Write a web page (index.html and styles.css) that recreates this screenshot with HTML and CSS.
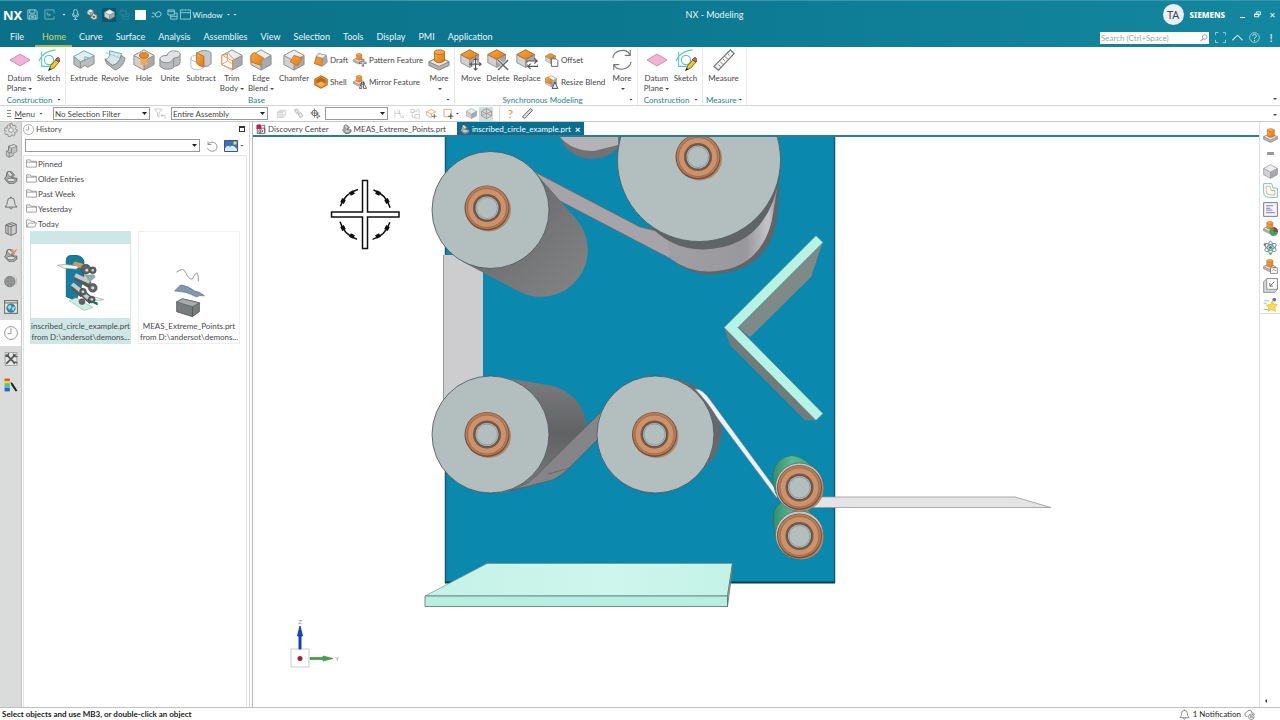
FILE: index.html
```html
<!DOCTYPE html>
<html lang="en">
<head>
<meta charset="utf-8">
<title>NX - Modeling</title>
<link rel="stylesheet" href="styles.css">
</head>
<body>
<svg class="sprite" aria-hidden="true">
  <defs>
    <linearGradient id="gOr" x1="0" y1="0" x2="1" y2="1"><stop offset="0" stop-color="#f9a845"/><stop offset="1" stop-color="#e07a10"/></linearGradient>
  </defs>
  <symbol id="plane" viewBox="0 0 24 24"><path d="M1 12 12 5.500 23 12 12 18.500Z" fill="#f3b3d4" stroke="#c78aa8"/></symbol>
  <symbol id="sketch" viewBox="0 0 24 24"><g fill="none" stroke="#5cc6c4" stroke-width="1.200"><path d="M1 13C4 6 10 2 19 1M4 3v16h9"/><circle cx="12" cy="12" r="5"/></g><path d="M12 23l2-5 7-8 3 3-7 8z" fill="#f2c928" stroke="#6b5a20"/><path d="M19 11.500 22 9l2 2.500-2 2.500z" fill="#c96a6a" stroke="#6b3a30"/><path d="m11 24 1.500-3.500 2 1.500z" fill="#222"/></symbol>
  <symbol id="cube" viewBox="0 0 24 24"><path d="M12 1 23 7 12 13 1 7Z" fill="#eceded"/><path d="M1 7v10l11 6V13Z" fill="#cfd1d2"/><path d="M23 7v10l-11 6V13Z" fill="#a7aaac"/><path d="M12 1 23 7v10l-11 6L1 17V7ZM1 7l11 6 11-6M12 13v10" fill="none" stroke="#85888a"/></symbol>
  <symbol id="warmcube" viewBox="0 0 24 24"><path d="M12 1 23 7v10l-11 6L1 17V7Z" fill="#ccd5d6" stroke="#8a7474" stroke-width="1.300"/><path d="M1 7l11 6 11-6M12 13v10M1 17l11-6 11 6M12 1v10" fill="none" stroke="#b27b7b" stroke-width="1.300"/></symbol>
  <symbol id="extrude" viewBox="0 0 24 24"><path d="M1 8v9l7 4 5-3 3 2 7-4V7L13 12l-5 2Z" fill="#babdbe" stroke="#888"/><path d="M1 8l11-6 11 5-5 3-5-1.500v3L8 14Z" fill="#e5eceb" stroke="#49b5ae"/><path d="M8 14v7" stroke="#888"/></symbol>
  <symbol id="revolve" viewBox="0 0 24 24"><path d="M6 2l13 3-2 7q-3 5-8 6L1 11q6 1 5-9Z" fill="#dce6e5" stroke="#49b5ae"/><path d="M1 11l8 7q7-1 10-11l4 3q-2 10-11 13l-9-7Z" fill="#b3b6b7" stroke="#808384"/><path d="M2 4l16 6" stroke="#7bc" stroke-dasharray="3 1"/></symbol>
  <symbol id="hole" viewBox="0 0 24 24"><use href="#cube"/><path d="M8 7v9q4 4 8 0V7Z" fill="#efa95c"/><ellipse cx="12" cy="7" rx="5" ry="3" fill="#f08c1c" stroke="#ba6b14"/></symbol>
  <symbol id="unite" viewBox="0 0 24 24"><path d="M1 11v8q4 4 10 3 4 0 6-3 6-1 6-4V6H10z" fill="#b9bcbd" stroke="#848688"/><path d="M1 11q0-4 8-4 1-5 7-5 7 0 7 4 0 3-7 4-2 5-8 5-6 0-7-4Z" fill="#e3e5e5" stroke="#848688"/><path d="M16 10v9" stroke="#848688"/></symbol>
  <symbol id="subtract" viewBox="0 0 24 24"><path d="M8 4q8-5 15 0v12q-3 4-8 3V9L8 5Z" fill="#c6c8c9" stroke="#888"/><path d="M7 4l8 4v12q-7-2-8-5Z" fill="url(#gOr)" stroke="#c56e15"/><path d="M1 10q0-3 6-3M1 10v9c1 5 13 5 14 0M1 10q1 4 7 4" fill="none" stroke="#9aaad5" stroke-width=".8"/></symbol>
  <symbol id="trim" viewBox="0 0 24 24"><use href="#cube"/><path d="M1 7 12 13v10L1 17Z" fill="#fff"/><path d="M1 7l7-2 6 6-2 11-11-5Zm0 10 6-4 7 4M7 5v8" fill="none" stroke="#f0963c"/></symbol>
  <symbol id="edge" viewBox="0 0 24 24"><use href="#cube"/><path d="M1 8q1-4 4-4l10 6q-4 2-3 8L1 14Z" fill="url(#gOr)" stroke="#cc7315"/></symbol>
  <symbol id="chamfer" viewBox="0 0 24 24"><use href="#cube"/><path d="M12 7l9 3-5 8-8-4Z" fill="url(#gOr)" stroke="#cc7315"/></symbol>
  <symbol id="draft" viewBox="0 0 24 24"><path d="M8 1l13 3 2 12-9 7L1 18 4 6Z" fill="#a8abad" stroke="#7d8082"/><path d="M4 6l11 3-2 13-12-4Z" fill="#f2912a" stroke="#c06c18"/><path d="M8 1l13 3-6 5L4 6Z" fill="#eee" stroke="#888"/></symbol>
  <symbol id="shell" viewBox="0 0 24 24"><path d="M12 1 23 7v10l-11 6L1 17V7Z" fill="#e48a2c" stroke="#925719"/><path d="M12 4 20 8.500v6L12 19l-8-4.500v-6Z" fill="#b56a20"/><path d="m12 11 8 4-8 5-8-5z" fill="#ffb157"/></symbol>
  <symbol id="boss" viewBox="0 0 24 24"><path d="M1 14 12 9l11 5v4l-11 5-11-5Z" fill="#b2b5b6" stroke="#7d8082"/><path d="M1 14 12 9l11 5-11 5Z" fill="#e8e9e9" stroke="#7d8082"/><path d="M7 3v10q5 4 11 0V3Z" fill="url(#gOr)" stroke="#bf6b16"/><ellipse cx="12.500" cy="3.500" rx="5.500" ry="2.500" fill="#f6a848" stroke="#bf6b16"/></symbol>
  <symbol id="pattern" viewBox="0 0 24 24"><use href="#boss" width="20" height="20"/><path d="M17 11v12M11 17h12" stroke="#555" stroke-width="4"/><path d="M17 12v10M12 17h10" stroke="#fff" stroke-width="1.500"/></symbol>
  <symbol id="mirror" viewBox="0 0 24 24"><use href="#boss" width="20" height="20"/><path d="m11 23 4-11v11zm7-11 5 11h-5z" fill="#fff" stroke="#555" stroke-width="1.500"/></symbol>
  <symbol id="orcube" viewBox="0 0 24 24"><use href="#cube"/><path d="M12 1 23 7 12 13 1 7Z" fill="url(#gOr)" stroke="#b96715"/></symbol>
  <symbol id="move" viewBox="0 0 24 24"><use href="#orcube" width="21" height="21"/><path d="M17 10v13M11 16.500h12" stroke="#fff" stroke-width="3"/><path d="M17 10v13M11 16.500h12M15 12l2-2 2 2M15 21l2 2 2-2M13 14.500l-2 2 2 2M21 14.500l2 2-2 2" stroke="#555" stroke-width="1.200" fill="none"/></symbol>
  <symbol id="delete" viewBox="0 0 24 24"><use href="#orcube" width="21" height="21"/><path d="m12 12 11 11m0-11L12 23" stroke="#fff" stroke-width="3"/><path d="m12 12 11 11m0-11L12 23" stroke="#666" stroke-width="1.600"/></symbol>
  <symbol id="replace" viewBox="0 0 24 24"><use href="#orcube" width="21" height="21"/><path d="M12 14h11M24 18H13" stroke="#fff" stroke-width="4"/><path d="M12 15v-2h11l-3-3m3 3-3 3M24 17v2H13l3-3m-3 3 3 3" stroke="#555" fill="none" stroke-width="1.200"/></symbol>
  <symbol id="offset" viewBox="0 0 24 24"><use href="#orcube" width="19" height="19"/><path d="M11 10h8l3 3v10H11Z" fill="#fff" stroke="#555" stroke-width="1.500"/></symbol>
  <symbol id="resize" viewBox="0 0 24 24"><use href="#edge" width="21" height="21"/><path d="m12 23 5-11 5 11z" fill="#eee" stroke="#444" stroke-width="1.600"/></symbol>
  <symbol id="cycle" viewBox="0 0 24 24"><path d="M2 10C3 1 17-2 21 7M22 14C20 23 7 25 3 17M21 1v6h-6M3 23v-6h6" fill="none" stroke="#777" stroke-width="1.200"/></symbol>
  <symbol id="ruler" viewBox="0 0 24 24"><path d="M19 1 23 5 6 23 1 19Z" fill="#f4f4f4" stroke="#717577" stroke-width="1.400"/><path d="m16 5 2 2m-5 1 3 3m-5 0 2 2m-5 1 3 3m-5 0 2 2" stroke="#717577"/></symbol>
  <symbol id="darkruler" viewBox="0 0 24 24"><path d="M19 1 23 5 6 23 1 19Z" fill="#ddd" stroke="#555" stroke-width="2"/></symbol>
  <symbol id="save" viewBox="0 0 24 24"><path d="M2 2h17l3 3v17H2ZM6 2v7h11V2M6 22v-9h12v9M9 16h6M9 19h6" fill="none" stroke="#a7d5e0" stroke-width="2"/></symbol>
  <symbol id="redo" viewBox="0 0 24 24"><path d="M2 2h20v7M2 2v20h20v-6M7 7v6h6M11 10l3 3-3 3" fill="none" stroke="#7dbccb" stroke-width="1.800"/></symbol>
  <symbol id="mic" viewBox="0 0 24 24"><path d="M12 1q4 0 4 4v6q0 4-4 4t-4-4V5q0-4 4-4ZM5 10q0 8 7 8t7-8M12 18v5M8 23h8" fill="none" stroke="#a7d5e0" stroke-width="2"/></symbol>
  <symbol id="parts" viewBox="0 0 24 24"><use href="#cube" width="15" height="15"/><path d="M14 9l8 5v7l-7 3-8-5Z" fill="#d8d2cf" stroke="#6b625e" stroke-width="2"/><circle cx="15" cy="17" r="2.500" fill="#555"/></symbol>
  <symbol id="loop" viewBox="0 0 24 24"><path d="M1 17h6M2 9q5-3 7 4t8 4q6-2 5-7t-7-4q-6 1-5 8" fill="none" stroke="#a7d5e0" stroke-width="2"/></symbol>
  <symbol id="cascade" viewBox="0 0 24 24"><path d="M2 2h14v11H2ZM2 5h14M8 13v9h14V9h-6M8 16h14" fill="none" stroke="#a7d5e0" stroke-width="1.800"/></symbol>
  <symbol id="window" viewBox="0 0 24 24"><path d="M1 2h22v20H1ZM1 8h22" fill="none" stroke="#a7d5e0" stroke-width="1.800"/></symbol>
  <symbol id="restore" viewBox="0 0 24 24"><path d="M8 8V3h14v10h-5M2 10h14v10H2ZM2 12h14" fill="none" stroke="#fff" stroke-width="3"/></symbol>
  <symbol id="full" viewBox="0 0 24 24"><path d="M1 7V1h6M17 1h6v6M1 17v6h6M17 23h6v-6" fill="none" stroke="#9ed1de" stroke-width="2"/></symbol>
  <symbol id="up" viewBox="0 0 24 24"><path d="M1 18 12 7l11 11" fill="none" stroke="#c3e3eb" stroke-width="2.500"/></symbol>
  <symbol id="help" viewBox="0 0 24 24"><circle cx="12" cy="12" r="10.500" fill="none" stroke="#a7d5e0" stroke-width="2"/><path d="M8 9q0-4 4-4t4 4q0 2-4 4v2M12 17v3" fill="none" stroke="#c3e3eb" stroke-width="2"/></symbol>
  <symbol id="glass" viewBox="0 0 24 24"><circle cx="14" cy="9" r="7" fill="none" stroke="#777" stroke-width="2"/><path d="m9 14-8 8" stroke="#777" stroke-width="3"/></symbol>
  <symbol id="funnel" viewBox="0 0 24 24"><path d="M1 2h15l-6 8v9l-3-3v-6ZM14 15h8v7M17 12l-3 3 3 3" fill="none" stroke="#bbb" stroke-width="1.500"/></symbol>
  <symbol id="stack" viewBox="0 0 24 24"><path d="M3 9v12h12V9ZM3 9l5-4h13l-6 4M21 5v11l-6 5" fill="#e3e3e3" stroke="#bbb"/></symbol>
  <symbol id="chain" viewBox="0 0 24 24"><path d="M3 4l6-2 4 6-5 4ZM11 12l6-2 5 7-6 5ZM9 9l6 6" fill="#e5e5e5" stroke="#bbb" stroke-width="2"/></symbol>
  <symbol id="cloud" viewBox="0 0 24 24"><path d="M8 16H5q-4-1-3-5 0-3 4-4 2-5 7-4 4 1 4 5 5 0 6 5" fill="none" stroke="#666" stroke-width="1.600"/><circle cx="16" cy="17" r="6" fill="#fff" stroke="#666" stroke-width="1.600"/><path d="M13 15h6M13 18h6M15 14v6M18 14v6" stroke="#666"/></symbol>
  <symbol id="snap" viewBox="0 0 24 24"><circle cx="10" cy="11" r="6" fill="none" stroke="#555" stroke-width="2"/><path d="M10 1v20M1 11h19M15 13l7 5-4 1-2 4Z" fill="none" stroke="#555" stroke-width="1.500"/></symbol>
  <symbol id="axes" viewBox="0 0 24 24"><path d="M2 4v17M2 12h14M7 4l9 16M12 4v8M18 15l4 5-7 1" fill="none" stroke="#c2c2c2" stroke-width="1.500"/></symbol>
  <symbol id="blocks" viewBox="0 0 24 24"><path d="M2 3h7v7H2ZM9 7h7M5 10v10h6M11 14h10v8H11ZM14 4h6v7" fill="none" stroke="#bbb" stroke-width="1.500"/></symbol>
  <symbol id="layers" viewBox="0 0 24 24"><path d="M1 8 11 3l11 5-11 5ZM1 8v8l11 5V13" fill="#fdf7ed" stroke="#d79a68" stroke-width="1.500"/><path d="M18 13v10M13 18h10" stroke="#666" stroke-width="2"/></symbol>
  <symbol id="pick" viewBox="0 0 24 24"><path d="M2 3h16v16H2Z" fill="none" stroke="#d48843" stroke-width="1.500"/><path d="M17 12v12M11 18h12" stroke="#555" stroke-width="2.500"/></symbol>
  <symbol id="gear" viewBox="0 0 24 24"><path d="m10 1h4l1 4 4-1 2 3-2 3 4 2-1 3-4 1 1 4-3 2-3-2-2 4-4-1v-4l-4 1-2-3 3-3-4-2 2-4 4 1-1-4 3-2 3 3Z" fill="#ddd" stroke="#888" stroke-width="1.500"/><circle cx="12" cy="12" r="4" fill="#eee" stroke="#888" stroke-width="1.500"/></symbol>
  <symbol id="nav" viewBox="0 0 24 24"><path d="M8 4 17 1l5 3v9l-6 3v4l-7 3-5-3v-8l4-1Z" fill="#c4c4c4" stroke="#666"/><path d="M13 7v9M4 12l5 3 4-1M9 15v8M8 4v7" fill="none" stroke="#666"/><path d="m8 4 9-3 5 3-9 3Z" fill="#e6e6e6" stroke="#666"/></symbol>
  <symbol id="clamp" viewBox="0 0 24 24"><path d="M1 15q4-3 4-11 7-5 13 5l-5 4 9 1v5q-8 8-15 3Z" fill="#aaa" stroke="#555" stroke-width="1.300"/><ellipse cx="10" cy="7" rx="5" ry="3" transform="rotate(48 10 7)" fill="#e0e0e0" stroke="#555"/><ellipse cx="12" cy="17" rx="7" ry="3" fill="#ddd" stroke="#555"/></symbol>
  <symbol id="bell" viewBox="0 0 24 24"><path d="M2 19q4-4 4-10 0-6 6-6t6 6q0 6 4 10ZM9 20q3 5 6 0M12 1v3" fill="none" stroke="#666" stroke-width="1.500"/></symbol>
  <symbol id="book" viewBox="0 0 24 24"><path d="M3 5 13 1l8 3v15l-9 4-9-4ZM3 5l9 3 9-4M12 8v15M7 6v15M8 3l8 3" fill="#ccc" stroke="#666" stroke-width="1.500"/></symbol>
  <symbol id="clampfire" viewBox="0 0 24 24"><use href="#clamp"/><path d="m12 6 3-5 2 4 5-4-1 5-6 4Z" fill="#e9964d"/></symbol>
  <symbol id="globe" viewBox="0 0 24 24"><circle cx="10" cy="13" r="9" fill="#898989" stroke="#666"/><path d="M10 4v18M5 5q-4 8 0 16M13 5q6 8 0 16M2 10h16M1 15h17" fill="none" stroke="#a5a5a5"/><path d="M17 2q8 8 3 17" fill="none" stroke="#aaa"/></symbol>
  <symbol id="web" viewBox="0 0 24 24"><path d="M1 1h22v22H1Z" fill="#eee" stroke="#777" stroke-width="2"/><path d="M1 5h22" stroke="#777" stroke-width="2"/><circle cx="12" cy="14" r="8" fill="#268ba5"/><path d="m6 11 5-3 2 4-4 5Zm9 0 4 1-3 7-3-3Z" fill="#acd8df"/></symbol>
  <symbol id="clock" viewBox="0 0 24 24"><circle cx="12" cy="12" r="11" fill="#fff" stroke="#777" stroke-width="1.300"/><path d="M12 4v9H6" fill="none" stroke="#777" stroke-width="1.300"/></symbol>
  <symbol id="tools" viewBox="0 0 24 24"><path d="M2 1h20v22H2Z" fill="#e7e7e7" stroke="#777"/><path d="m4 4 15 16M20 4 4 20" stroke="#555" stroke-width="3"/><path d="M2 6q5 5 6-4M16 3q0 6 7 5M17 20q2-5 6-1" fill="none" stroke="#555" stroke-width="2"/></symbol>
  <symbol id="rainbow" viewBox="0 0 24 24"><path d="M1 1h9v5H1z" fill="#e44b34"/><path d="M1 5h9v5H1z" fill="#eed83f"/><path d="M1 9h9v5H1z" fill="#60c84f"/><path d="M1 13h9v5H1z" fill="#34c9dc"/><path d="M1 17h9v6H1z" fill="#3366c4"/><path d="m11 7 4 2 8 13-3 1-7-10Z" fill="#222"/></symbol>
  <symbol id="folder" viewBox="0 0 24 20"><path d="M1 18V2h8l2 3h12v13ZM1 7h22" fill="#fff" stroke="#777" stroke-width="1.500"/></symbol>
  <symbol id="folderopen" viewBox="0 0 24 20"><path d="M1 18V2h8l2 3h8v4M1 18 6 9h17l-4 9Z" fill="#fff" stroke="#777" stroke-width="1.500"/></symbol>
  <symbol id="undo" viewBox="0 0 24 24"><path d="M4 3v6h7M4 9C9 1 22 4 22 14S7 26 3 16" fill="none" stroke="#777" stroke-width="1.500"/></symbol>
  <symbol id="picture" viewBox="0 0 28 24"><path d="M1 1h26v22H1Z" fill="#3b74b5" stroke="#34589a" stroke-width="2"/><path d="M2 17q5-9 10-3 5-7 14 4v4H2Z" fill="#dfeaf4"/><path d="M19 3h6v6h-6z" fill="#e8e94c"/></symbol>
  <symbol id="disc" viewBox="0 0 24 24"><path d="M3 10h18v13H3ZM7 14h4v7H7ZM14 3h7v18M12 13l5 4-5 3" fill="#fff" stroke="#6d4a55" stroke-width="2"/><path d="M1 3q7-5 12 0v9H1Z" fill="#c01f4f"/></symbol>
  <symbol id="contour" viewBox="0 0 24 24"><path d="M1 1h13l2 7h7v15H10q-9 0-9-9Z" fill="#fff" stroke="#6cc2bb" stroke-width="1.500"/><path d="M5 5h6l2 7h6v7h-8q-6 0-6-6Z" fill="none" stroke="#d8ab80" stroke-width="1.500"/></symbol>
  <symbol id="note" viewBox="0 0 24 24"><path d="M1 1h22v22H1Z" fill="#f5f3fa" stroke="#777" stroke-width="1.500"/><path d="M5 6h11M5 10h7M5 13h10M5 17h14" stroke="#8077a8" stroke-width="1.500"/></symbol>
  <symbol id="bosspie" viewBox="0 0 24 24"><use href="#boss" width="21" height="21"/><circle cx="17" cy="17" r="7" fill="#3aa65c"/><path d="M17 17V10a7 7 0 0 1 7 7Z" fill="#b52d4a"/></symbol>
  <symbol id="atom" viewBox="0 0 24 24"><g fill="none" stroke="#6b9296" stroke-width="1.500"><ellipse cx="12" cy="12" rx="4" ry="10"/><ellipse cx="12" cy="12" rx="4" ry="10" transform="rotate(60 12 12)"/><ellipse cx="12" cy="12" rx="4" ry="10" transform="rotate(120 12 12)"/></g><circle cx="12" cy="12" r="2.500" fill="#2b8c9e"/><circle cx="3" cy="7" r="2" fill="#b55"/><circle cx="12" cy="22" r="2" fill="#3c3"/></symbol>
  <symbol id="bossbox" viewBox="0 0 24 24"><use href="#boss" width="21" height="21"/><path d="M12 14h11v9H12Z" fill="#fff" stroke="#555"/><path d="m14 19 3-2 4 2" stroke="#555" fill="none"/></symbol>
  <symbol id="sheet" viewBox="0 0 24 24"><path d="M6 1h17v17l-4 5H1V6Z" fill="#d5d5d5" stroke="#666"/><path d="M6 1h17v17H6Z" fill="#fff" stroke="#666"/><path d="m18 6-7 7M11 8v5h5" stroke="#666" stroke-width="1.500" fill="none"/></symbol>
  <symbol id="star" viewBox="0 0 24 24"><path d="m15 6 2 5 6 1-4 4 1 7-6-3-6 3 1-6-4-4 7-1Z" fill="#f6dc52" stroke="#d7b637"/><path d="M2 6h8M1 10h5M1 20h7" stroke="#92bed3" stroke-width="1.500"/><circle cx="18" cy="4" r="3" fill="#637aa9"/></symbol>
</svg>

<header class="titlebar">
  <div class="title-row">
    <div class="quick">
      <span class="brand">NX</span>
      <button aria-label="Save"><svg class="i11"><use href="#save"/></svg></button>
      <button aria-label="Redo" class="roomy"><svg class="i11"><use href="#redo"/></svg></button>
      <button aria-label="History options" class="slim"><i class="caret"></i></button>
      <button aria-label="Voice"><svg class="i11"><use href="#mic"/></svg></button>
      <button aria-label="Assembly" class="roomy"><svg class="i11"><use href="#parts"/></svg></button>
      <button aria-label="Part" class="pressed"><svg class="i11"><use href="#cube"/></svg></button>
      <button aria-label="Export" class="faded"><svg class="i11"><use href="#cascade"/></svg></button>
      <button aria-label="Background"><i class="swatch"></i></button>
      <button aria-label="Replay"><svg class="i11"><use href="#loop"/></svg></button>
      <button aria-label="Cascade"><svg class="i11"><use href="#cascade"/></svg></button>
      <button class="window-btn"><svg class="i11"><use href="#window"/></svg>Window<i class="caret"></i></button>
      <button aria-label="Customize" class="slim"><i class="caret"></i></button>
    </div>
    <h1>NX - Modeling</h1>
    <div class="account">
      <span class="avatar">TA</span><span class="siemens">SIEMENS</span>
      <button aria-label="Minimize"><i class="minus"></i></button>
      <button aria-label="Restore"><svg class="i7"><use href="#restore"/></svg></button>
      <button aria-label="Close">✕</button>
    </div>
  </div>
  <div class="menu-row">
    <nav class="menu">
      <a href="#">File</a><a href="#" class="active">Home</a><a href="#">Curve</a><a href="#">Surface</a><a href="#">Analysis</a><a href="#">Assemblies</a><a href="#">View</a><a href="#">Selection</a><a href="#">Tools</a><a href="#">Display</a><a href="#">PMI</a><a href="#">Application</a>
    </nav>
    <div class="find">
      <label class="search"><input type="text" aria-label="Search" placeholder="Search (Ctrl+Space)"><svg class="i8"><use href="#glass"/></svg></label>
      <button aria-label="Full screen"><svg class="i11"><use href="#full"/></svg></button>
      <button aria-label="Collapse ribbon"><svg class="i11"><use href="#up"/></svg></button>
      <button aria-label="Help"><svg class="i11"><use href="#help"/></svg></button>
      <button aria-label="Alerts" class="bang">!</button>
    </div>
  </div>
</header>

<section class="ribbon">
  <div class="group">
    <div class="tools construct">
      <button><svg><use href="#plane"/></svg><span>Datum<br>Plane<i class="caret"></i></span></button>
      <button><svg><use href="#sketch"/></svg><span>Sketch</span></button>
    </div>
    <div class="group-name"><span>Construction</span><i class="caret"></i></div>
  </div>
  <div class="group">
    <div class="tools base">
      <button><svg><use href="#extrude"/></svg><span>Extrude</span></button>
      <button><svg><use href="#revolve"/></svg><span>Revolve</span></button>
      <button><svg><use href="#hole"/></svg><span>Hole</span></button>
      <button><svg><use href="#unite"/></svg><span>Unite</span></button>
      <button><svg><use href="#subtract"/></svg><span>Subtract</span></button>
      <button><svg><use href="#trim"/></svg><span>Trim<br>Body<i class="caret"></i></span></button>
      <button><svg><use href="#edge"/></svg><span>Edge<br>Blend<i class="caret"></i></span></button>
      <button><svg><use href="#chamfer"/></svg><span>Chamfer</span></button>
      <div class="pair"><button><svg><use href="#draft"/></svg>Draft</button><button><svg><use href="#shell"/></svg>Shell</button></div>
      <div class="pair"><button><svg><use href="#pattern"/></svg>Pattern Feature</button><button><svg><use href="#mirror"/></svg>Mirror Feature</button></div>
      <button><svg><use href="#boss"/></svg><span>More<br><i class="caret"></i></span></button>
    </div>
    <div class="group-name"><span>Base</span><i class="caret"></i></div>
  </div>
  <div class="group">
    <div class="tools sync">
      <button><svg><use href="#move"/></svg><span>Move</span></button>
      <button><svg><use href="#delete"/></svg><span>Delete</span></button>
      <button><svg><use href="#replace"/></svg><span>Replace</span></button>
      <div class="pair"><button><svg><use href="#offset"/></svg>Offset</button><button><svg><use href="#resize"/></svg>Resize Blend</button></div>
      <button><svg><use href="#cycle"/></svg><span>More<br><i class="caret"></i></span></button>
    </div>
    <div class="group-name"><span>Synchronous Modeling</span><i class="caret"></i></div>
  </div>
  <div class="group">
    <div class="tools construct">
      <button><svg><use href="#plane"/></svg><span>Datum<br>Plane<i class="caret"></i></span></button>
      <button><svg><use href="#sketch"/></svg><span>Sketch</span></button>
    </div>
    <div class="group-name"><span>Construction</span><i class="caret"></i></div>
  </div>
  <div class="group">
    <div class="tools measure">
      <button><svg><use href="#ruler"/></svg><span>Measure</span></button>
    </div>
    <div class="group-name"><span>Measure</span><i class="caret"></i></div>
  </div>
  <button class="overflow" aria-label="Ribbon options"><i class="caret"></i></button>
</section>

<section class="filters">
  <button class="menu-btn"><i class="burger"></i><span><u>M</u>enu</span><i class="caret"></i></button>
  <span class="combo wide"><select aria-label="Selection filter"><option>No Selection Filter</option></select></span>
  <button aria-label="Reset filter" class="funnel"><svg class="i12"><use href="#funnel"/></svg></button>
  <span class="combo wide"><select aria-label="Scope"><option>Entire Assembly</option></select></span>
  <div class="strip first">
    <button aria-label="Components"><svg class="i11"><use href="#stack"/></svg></button>
    <button aria-label="Links"><svg class="i11"><use href="#chain"/></svg></button>
    <button aria-label="Snap"><svg class="i11"><use href="#snap"/></svg></button>
  </div>
  <span class="combo short"><select aria-label="Layer"><option></option></select></span>
  <div class="strip second">
    <button aria-label="Axes"><svg class="i11"><use href="#axes"/></svg></button>
    <button aria-label="Structure"><svg class="i11"><use href="#blocks"/></svg></button>
    <button aria-label="Layers"><svg class="i11"><use href="#layers"/></svg></button>
    <button aria-label="Pick"><svg class="i11"><use href="#pick"/></svg><i class="caret"></i></button>
    <button aria-label="Shaded"><svg class="i11"><use href="#cube"/></svg></button>
    <button aria-label="Shaded with edges" class="on"><svg class="i11"><use href="#warmcube"/></svg></button>
  </div>
  <div class="strip third">
    <button aria-label="Tip" class="tip">?</button>
    <button aria-label="Ruler"><svg class="i11"><use href="#darkruler"/></svg></button>
  </div>
  <button class="overflow" aria-label="Toolbar options"><i class="caret"></i></button>
</section>

<main class="work">
  <nav class="rail" aria-label="Resource bar">
    <button aria-label="Settings"><svg><use href="#gear"/></svg></button>
    <button aria-label="Assembly navigator"><svg><use href="#nav"/></svg></button>
    <button aria-label="Part navigator"><svg><use href="#clamp"/></svg></button>
    <button aria-label="Notifications"><svg><use href="#bell"/></svg></button>
    <button aria-label="Library"><svg><use href="#book"/></svg></button>
    <button aria-label="Reuse"><svg><use href="#clampfire"/></svg></button>
    <button aria-label="Materials"><svg><use href="#globe"/></svg></button>
    <button aria-label="Web browser"><svg><use href="#web"/></svg></button>
    <button aria-label="History" class="current"><svg><use href="#clock"/></svg></button>
    <button aria-label="Process"><svg><use href="#tools"/></svg></button>
    <button aria-label="Appearance"><svg><use href="#rainbow"/></svg></button>
  </nav>

  <aside class="history">
    <div class="history-head"><svg class="i11"><use href="#clock"/></svg><h2>History</h2><button aria-label="Maximize"><i class="box"></i></button></div>
    <div class="history-find">
      <span class="combo"><select aria-label="History search"><option></option></select></span>
      <button aria-label="Refresh"><svg class="i12"><use href="#undo"/></svg></button>
      <button aria-label="Views"><svg class="i14"><use href="#picture"/></svg><i class="caret"></i></button>
    </div>
    <div class="history-list">
      <ul>
        <li><svg><use href="#folder"/></svg>Pinned</li>
        <li><svg><use href="#folder"/></svg>Older Entries</li>
        <li><svg><use href="#folder"/></svg>Past Week</li>
        <li><svg><use href="#folder"/></svg>Yesterday</li>
        <li><svg><use href="#folderopen"/></svg>Today</li>
      </ul>
      <div class="cards">
        <button class="card selected">
          <svg viewBox="30 245 101 74">
            <path d="M66 261q0-5 5-5h6q6 1 7 6v18l-8 22-10-4Z" fill="#157d9e" stroke="#0b526d" stroke-width=".8"/>
            <path d="M57 266l8-1 15 2-4 3-12-1Z" fill="#eef4f4" stroke="#777" stroke-width=".5"/>
            <path d="m69 302 7-3 17 10-9 3Z" fill="#cbeee3" stroke="#77a29c" stroke-width=".5"/>
            <path d="m90 297 14 4-6 1-10-3Z" fill="#eee" stroke="#888" stroke-width=".5"/>
            <path d="m72 265 3-3 13 4-1 6Z" fill="#d29a5c"/>
            <path d="m75 277 15 9M73 287l10 9M79 291l13 12" stroke="#55585a" stroke-width="7"/>
            <path d="m75 276 15 7M72 285l10 8M77 289l12 11" stroke="#c5c9ca" stroke-width="4"/>
            <g fill="#606365" stroke="#333" stroke-width=".5"><circle cx="86" cy="270" r="5"/><circle cx="93" cy="271" r="3.500"/><circle cx="93" cy="289" r="4.500"/><circle cx="83" cy="293" r="3.500"/><circle cx="92" cy="301" r="3.500"/><circle cx="82" cy="303" r="3"/></g>
            <g fill="#d8dada"><circle cx="87" cy="271" r="1.500"/><circle cx="93" cy="271" r="1.200"/><circle cx="93" cy="289" r="1.700"/><circle cx="83" cy="293" r="1.300"/><circle cx="92" cy="301" r="1.300"/></g>
            <path d="m84 276 10-1 2 3-6 5Z" fill="#91aaa6"/><path d="m86 300 12 4v3l-8-4Z" fill="#246d5c"/>
          </svg>
          <span>inscribed_circle_example.prt<br>from D:\andersot\demons...</span>
        </button>
        <button class="card">
          <svg viewBox="138 245 101 74">
            <path d="M176 273q7-5 9 0 3 8 7 7 3-7 5-6 1 2 1 8" fill="none" stroke="#777788" stroke-width=".8"/>
            <path d="m174 292 6-6q8 1 14 6 6 1 10 5-5-1-8 1-10-6-22-6Z" fill="#8198ad" stroke="#566b7c" stroke-width=".7"/>
            <path d="m176 303 6-3 17 4v9l-7 5-16-5Z" fill="#777d7c" stroke="#484d4c" stroke-width=".7"/><path d="m176 303 6-3 17 4-7 4Z" fill="#a7adaa" stroke="#484d4c" stroke-width=".5"/><path d="M192 308v10" stroke="#484d4c" stroke-width=".7"/>
          </svg>
          <span>MEAS_Extreme_Points.prt<br>from D:\andersot\demons...</span>
        </button>
      </div>
    </div>
  </aside>

  <section class="view">
    <div class="tabs">
      <a href="#"><svg><use href="#disc"/></svg>Discovery Center</a>
      <a href="#"><svg><use href="#clamp"/></svg>MEAS_Extreme_Points.prt</a>
      <a href="#" class="active"><svg><use href="#clamp"/></svg>inscribed_circle_example.prt<b>×</b></a>
    </div>
    <svg class="scene" viewBox="253 137 1006 570" preserveAspectRatio="xMidYMin meet" role="img" aria-label="Machine model">
      <defs>
        <linearGradient id="roll" x1="0" y1="0" x2="1" y2="1"><stop offset="0" stop-color="#5f6163"/><stop offset=".6" stop-color="#757677"/><stop offset="1" stop-color="#858586"/></linearGradient>
        <linearGradient id="belt" x1="0" y1="0" x2="1" y2="0"><stop offset="0" stop-color="#a09fa3"/><stop offset=".7" stop-color="#99989c"/><stop offset=".9" stop-color="#c5c4c8"/><stop offset="1" stop-color="#858589"/></linearGradient>
        <linearGradient id="roll3" x1="0" y1="0" x2="0" y2="1"><stop offset="0" stop-color="#7c7d7e"/><stop offset=".5" stop-color="#606264"/><stop offset="1" stop-color="#7c7d7f"/></linearGradient>
        <linearGradient id="mint" x1="0" y1="0" x2="1" y2="0"><stop offset="0" stop-color="#c4f1e6"/><stop offset=".6" stop-color="#cff6ec"/><stop offset="1" stop-color="#c3f2e6"/></linearGradient>
        <linearGradient id="green" x1="0" y1="0" x2="1" y2="0"><stop offset="0" stop-color="#368c6c"/><stop offset=".4" stop-color="#56b990"/><stop offset="1" stop-color="#3c9c78"/></linearGradient>
        <g id="ring"><circle cx="2" cy="1.500" r="22" fill="#a8886f"/><circle r="22.500" fill="#74503b"/><circle cy="-.5" r="21.500" fill="#b97c58"/><circle r="19.500" fill="#cd916b" stroke="#8c5e42" stroke-width=".7"/><circle r="14" fill="#7b5941"/><circle r="12.500" fill="#5c5550"/><circle r="11.500" fill="#b3bfbe"/><circle r="10.500" fill="#b3bfbe" stroke="#7c8586" stroke-width=".6"/></g>
      </defs>
      <path d="M445 137h390v446H445Z" fill="#0a88ae"/>
      <path d="M445.500 137v446M834.500 137v446" stroke="#155d76" stroke-width="1.500"/><path d="M445 582.500h390" stroke="#083f50" stroke-width="2"/>
      <path d="M443 255h40v150h-40Z" fill="#cdcdcf"/><path d="M443.500 255v150" stroke="#999" stroke-width="1"/>
      <path d="M560 137q8 20 31 22 17 0 28-12v-10Z" fill="#707274"/><path d="M560 137q12 14 34 14l24-6v-8Z" fill="#b5b3b7"/>
      <path d="M533 171 640 227l50 12-13 23-6-3L560 201Z" fill="#a6a4a9" stroke="#69696c" stroke-width=".8"/>
      <path d="M533.600 171 576 218.700A47 47 0 0 1 519 291.500L462.600 261.700Z" fill="url(#roll)"/>
      <path d="M668 236 671 259Q688 274 710 274.500 776 272 778 205l2-45Z" fill="#626466"/>
      <path d="M666 234 671 259Q688 272 710 271.500 760 270 772 220L780 170Z" fill="url(#belt)"/>
      <path d="M646 222Q670 249.500 703 249.500 768 248 780 175l.5-15Z" fill="#5f6467"/>
      <circle cx="699" cy="160" r="81.500" fill="#b3bfbf" stroke="#515c60" stroke-width=".8"/>
      <circle cx="490.500" cy="210" r="58.500" fill="#b3bfbf" stroke="#485459" stroke-width=".8"/>
      <path d="M495 376l58 10A47 47 0 0 1 587 424L553 480 500 493Z" fill="url(#roll3)"/>
      <path d="m602 411-4 28-26 26q-10 11-20 15l-42 11q20-6 36-25Z" fill="#858486" stroke="#555" stroke-width=".6"/><path d="m548 474 22-6" stroke="#555" stroke-width=".6"/>
      <circle cx="490.500" cy="434.500" r="58.500" fill="#b3bfbf" stroke="#485459" stroke-width=".8"/>
      <path d="M675 378Q721 392 721.700 431 720 458 700 470Z" fill="#66696b"/>
      <path d="M695 389q7-1 16 12l66 90v7l-59-79q-10-17-23-30Z" fill="#eef1f6" stroke="#6c8795" stroke-width=".5"/>
      <circle cx="655.500" cy="434.500" r="58.500" fill="#b3bfbf" stroke="#485459" stroke-width=".8"/>
      <path d="M812 497h203l36 10.500H812Z" fill="#e4e4e5" stroke="#97999b" stroke-width=".8"/>
      <path d="M777 542Q770 515 776 507 785 497 799 501L819 521Z" fill="url(#green)" stroke="#286c59" stroke-width=".6"/><circle cx="799.500" cy="535" r="24" fill="#bec9c6" stroke="#56615f" stroke-width=".7"/>
      <path d="M776 494Q768 472 779 461 791 450 806 461L820 474Z" fill="url(#green)" stroke="#286c59" stroke-width=".6"/><circle cx="799.500" cy="487" r="24" fill="#bec9c6" stroke="#56615f" stroke-width=".7"/>
      <use href="#ring" x="487" y="208"/><use href="#ring" x="698" y="157"/><use href="#ring" x="487" y="434.500"/><use href="#ring" x="654.500" y="434.500"/><use href="#ring" x="799.500" y="487.500"/><use href="#ring" x="799.500" y="536"/>
      <path d="M822.700 242.300 811 277 750 337.300 738.300 327.300Z" fill="#7d8a88"/><path d="m724 327.300 6 17.700 75 75.300h11Z" fill="#6f7c7b"/>
      <path d="m816 235.500 7 7-85 85 85 86-7 7-92-93Z" fill="#b7f3e5" stroke="#57777a" stroke-width=".6"/>
      <path d="M487 563.500h245.500l-5 32.500H425Z" fill="url(#mint)" stroke="#768d8b" stroke-width=".7"/><path d="M425 596h302.500v10.500H425Z" fill="#b6eee1" stroke="#56716f" stroke-width=".8"/><path d="m732.500 563.500-.5 9-4.500 34V596Z" fill="#92b9b2" stroke="#56716f" stroke-width=".7"/>
      <g fill="none" stroke="#111"><circle cx="365" cy="214.500" r="26" stroke-width="1.500" stroke-dasharray="25 15.840" stroke-dashoffset="-7.900"/><g stroke-width="4"><path d="m342 203 2-4M350 194l4-2M376 192l4 2M386 199l2 4M342 226l2 4M350 235l4 2M376 237l4-2M386 230l2-4"/></g></g>
      <path d="M362.500 180.500h5V212h31.500v5h-31.500v31.500h-5V217H331.500v-5h31Z" fill="#fff" stroke="#111" stroke-width="1.500"/>
      <path d="M291 649h18v18h-18Z" fill="#fff" stroke="#ccc"/><circle cx="300" cy="658.500" r="2.500" fill="#a51c3c"/>
      <path d="M299 649v-13h-1.500l2.500-10 2.500 10H301v13Z" fill="#1c3fc0" stroke="#1c3fc0"/><path d="M310 657.500h13V656l10 2.500-10 2.500v-1.500h-13Z" fill="#43a047" stroke="#3b953f" stroke-width=".7"/>
      <text x="300" y="624" text-anchor="middle" class="axis">Z</text><text x="337" y="661" text-anchor="middle" class="axis">Y</text>
    </svg>
  </section>

  <nav class="rail-right" aria-label="Tool bar">
    <button aria-label="Feature"><svg><use href="#boss"/></svg></button>
    <button aria-label="Separator" class="dash"><i></i></button>
    <button aria-label="Body"><svg><use href="#cube"/></svg></button>
    <button aria-label="Contour"><svg><use href="#contour"/></svg></button>
    <button aria-label="Note"><svg><use href="#note"/></svg></button>
    <button aria-label="Analysis"><svg><use href="#bosspie"/></svg></button>
    <button aria-label="Simulation"><svg><use href="#atom"/></svg></button>
    <button aria-label="Inspect"><svg><use href="#bossbox"/></svg></button>
    <button aria-label="Sheet"><svg><use href="#sheet"/></svg></button>
    <button aria-label="Favourites"><svg><use href="#star"/></svg></button>
    <i class="caret-left"></i>
  </nav>
</main>

<footer class="status">
  <span>Select objects and use MB3, or double-click an object</span>
  <button class="notice"><svg class="i11"><use href="#bell"/></svg>1 Notification<svg class="i11"><use href="#cloud"/></svg></button>
</footer>
</body>
</html>
```
FILE: styles.css
```css
* { box-sizing: border-box; }
html, body { height: 100%; }
body { margin: 0; display: flex; flex-direction: column; overflow: hidden; background: #fff; color: #484848; font: 8px/10px Lato, "Noto Sans", sans-serif; }
button { display: flex; align-items: center; justify-content: center; margin: 0; padding: 0; border: 0; background: none; color: inherit; font: inherit; white-space: nowrap; }
a { color: inherit; text-decoration: none; white-space: nowrap; }
svg { display: block; flex: none; }
h1, h2 { margin: 0; font: inherit; }
.sprite { position: absolute; width: 0; height: 0; }
.i7 { width: 7px; height: 7px; }
.i8 { width: 8px; height: 8px; }
.i11 { width: 11px; height: 11px; }
.i12 { width: 12px; height: 12px; }
.i14 { width: 14px; height: 12px; }
.caret { display: inline-block; flex: none; width: 4px; height: 2px; margin-left: 2px; vertical-align: middle; background: currentColor; clip-path: polygon(0 0, 100% 0, 50% 100%); }

.titlebar { flex: none; color: #e9f5f8; background: linear-gradient(90deg, #0b7188, #0c7990 50%, #13879f); border-top: 1px solid #3d95aa; }
.title-row { display: grid; grid-template-columns: 1fr auto 1fr; align-items: center; height: 27px; padding: 0 4px 0 3px; }
.title-row h1 { font-size: 9px; padding-left: 150px; }
.quick { display: flex; align-items: center; }
.quick button { width: 16px; height: 14px; flex: none; }
.quick .roomy { width: 19px; }
.quick .slim { width: 8px; }
.quick .brand { width: 21px; font: bold 13px/16px "Noto Sans", sans-serif; color: #fff; }
.quick .pressed { width: 14px; background: #0a566b; }
.quick .faded { opacity: .2; }
.quick .window-btn { width: 50px; gap: 2px; }
.swatch { width: 11px; height: 10px; background: #fff; }
.account { display: flex; align-items: center; justify-content: flex-end; gap: 8px; }
.avatar { width: 21px; height: 21px; margin-right: -2px; border-radius: 50%; background: #eaf0f2; color: #444; font: 11px/21px "Noto Sans", sans-serif; text-align: center; }
.siemens { font: 800 8px/10px "Noto Sans", sans-serif; margin-right: 6px; color: #fff; }
.account button { min-width: 7px; height: 10px; }
.minus { width: 5px; height: 1px; margin-top: 5px; background: #fff; }
.menu-row { display: flex; justify-content: space-between; align-items: center; height: 19px; padding: 0 4px 0 3px; }
.menu { display: flex; height: 19px; font-size: 9px; line-height: 18px; }
.menu a { padding: 0 6px 0 7px; }
.menu .active { margin-left: 5px; color: #d2d866; border-bottom: 2px solid #a9b94f; }
.find { display: flex; align-items: center; gap: 6px; }
.search { display: flex; align-items: center; width: 109px; height: 12px; padding: 0 1px; background: #fff; }
.search input { flex: 1; min-width: 0; border: 0; padding: 0; background: none; font: inherit; }
.search input::placeholder { color: #a5a5a5; opacity: 1; }
.bang { width: 10px; font-size: 12px; }

.ribbon { flex: none; display: flex; height: 59px; border-bottom: 1px solid #d2d4d5; }
.group { display: flex; flex-direction: column; justify-content: space-between; padding: 2px 0 0 3px; border-right: 1px solid #e8e9e9; }
.group:first-child { padding-left: 4px; }
.tools { display: grid; height: 45px; }
.construct { grid-template-columns: 31px 27px; padding-right: 3px; }
.base { grid-template-columns: 30px 32px 26px 26px 36px 26px 32px 34px 39px 74px 30px; }
.sync { grid-template-columns: 26px 28px 30px 65px 30px; }
.measure { grid-template-columns: 35px; padding: 0 3px 0 0; }
.tools > button { flex-direction: column; justify-content: flex-start; gap: 2px; text-align: center; }
.tools > button > svg { width: 22px; height: 22px; }
.pair { display: grid; grid-template-rows: 22px 22px; padding-left: 3px; justify-items: start; }
.pair button { gap: 2px; }
.pair svg { width: 14px; height: 14px; }
.group-name { display: flex; align-items: center; height: 11px; padding-right: 4px; color: #29818f; }
.group-name span { flex: 1; text-align: center; }
.group-name .caret { color: #333; }
.overflow { margin-left: auto; padding-right: 3px; align-self: flex-end; height: 12px; }

.filters { flex: none; display: flex; align-items: center; height: 16px; border-bottom: 1px solid #c5c7c8; }
.menu-btn { width: 36px; margin-left: 7px; gap: 2px; }
.burger { width: 7px; height: 7px; margin-right: 2px; border-top: 1px solid #888; border-bottom: 1px solid #888; background: linear-gradient(#888, #888) 0 2px / 7px 1px no-repeat; }
.combo { position: relative; display: flex; }
.combo select { width: 100%; height: 13px; padding: 0 1px; border: 1px solid #999; border-radius: 0; background: #fff; color: #444; font: inherit; appearance: none; }
.combo::after { content: ""; position: absolute; right: 3px; top: 5px; width: 5px; height: 3px; background: #222; clip-path: polygon(0 0, 100% 0, 50% 100%); pointer-events: none; }
.combo.wide { width: 97px; margin-left: 10px; }
.combo.short { width: 63px; }
.funnel { margin: 0 -5px 0 4px; }
.strip { display: flex; align-items: center; height: 15px; }
.strip.first { margin: 0 1px 0 5px; }
.strip button { width: 17px; height: 14px; }
.strip.second { padding: 0 6px 0 3px; border-right: 1px solid #ddd; }
.strip.second button { width: 16px; }
.strip.second button:nth-child(4) { width: 24px; }
.strip.second .on { width: 14px; background: #c9e3e5; }
.strip.third { padding-left: 2px; }
.tip { color: #e0932f; font-size: 12px; }

.work { flex: 1; min-height: 0; display: flex; }
.rail { flex: none; width: 22px; display: flex; flex-direction: column; background: #dadbdb; border-right: 1px solid #c3c5c6; }
.rail button { height: 26px; flex: none; }
.rail button:first-child { height: 16px; }
.rail svg { width: 14px; height: 14px; }
.rail .current { background: #fff; }
.history { flex: none; width: 228px; display: flex; flex-direction: column; border-right: 1px solid #d4d5d6; }
.history-head { display: flex; align-items: center; gap: 2px; height: 14px; padding: 0 4px 0 1px; }
.history-head h2 { flex: 1; }
.box { width: 6px; height: 6px; border: 1px solid #333; border-top-width: 2px; }
.history-find { display: flex; align-items: center; gap: 6px; height: 19px; padding: 0 5px 0 3px; }
.history-find .combo { flex: 1; }
.history-list { flex: 1; margin: 0 2px 0 1px; border: 1px solid #e4e4e4; border-bottom: 0; }
.history-list ul { list-style: none; margin: 0; padding: 0 0 0 2px; }
.history-list li { display: flex; align-items: center; gap: 1px; height: 15px; }
.history-list li svg { width: 11px; height: 9px; }
.cards { display: grid; grid-template-columns: 101px 102px; gap: 7px; padding-left: 6px; }
.card { flex-direction: column; border: 1px solid #efefef; background: #fff; line-height: 11px; height: 113px; justify-content: flex-end; }
.card svg { width: 100%; height: 74px; background: #fff; }
.card span { padding-top: 3px; height: 25px; }
.card.selected { background: #cfe6e7; border-color: #cfe6e7; }

.view { flex: 1; min-width: 0; display: flex; flex-direction: column; margin-left: 2px; border-left: 1px solid #b4b9bb; }
.tabs { flex: none; display: flex; height: 15px; gap: 13px; border-bottom: 2px solid #2b7c94; padding-left: 3px; }
.tabs a { display: flex; align-items: center; gap: 2px; }
.tabs svg { width: 10px; height: 10px; }
.tabs .active { margin-left: -2px; padding: 1px 3px 0; background: #096f91; color: #fff; }
.tabs b { margin-left: 2px; font-size: 10px; }
.scene { flex: 1; min-height: 0; width: 100%; }
.axis { font: 6px Lato, sans-serif; fill: #8892a5; }
.rail-right { flex: none; width: 21px; border-left: 1px solid #dedfe0; display: flex; flex-direction: column; align-items: center; padding-top: 4px; }
.rail-right button { width: 100%; height: 19px; flex: none; }
.rail-right .dash { height: 17px; }
.rail-right svg { width: 15px; height: 15px; }
.dash i { width: 7px; height: 3px; background: #999; }
.rail-right button:last-of-type { border-bottom: 1px solid #ddd; }
.caret-left { width: 2px; height: 4px; margin: auto 8px 4px 0; background: #333; clip-path: polygon(100% 0, 100% 100%, 0 50%); }
.status { flex: none; height: 13px; display: flex; align-items: center; justify-content: space-between; padding: 0 25px 0 2px; border-top: 1px solid #bfc1c2; color: #222; font-weight: bold; }
.notice { gap: 3px; font-weight: normal; }
```
